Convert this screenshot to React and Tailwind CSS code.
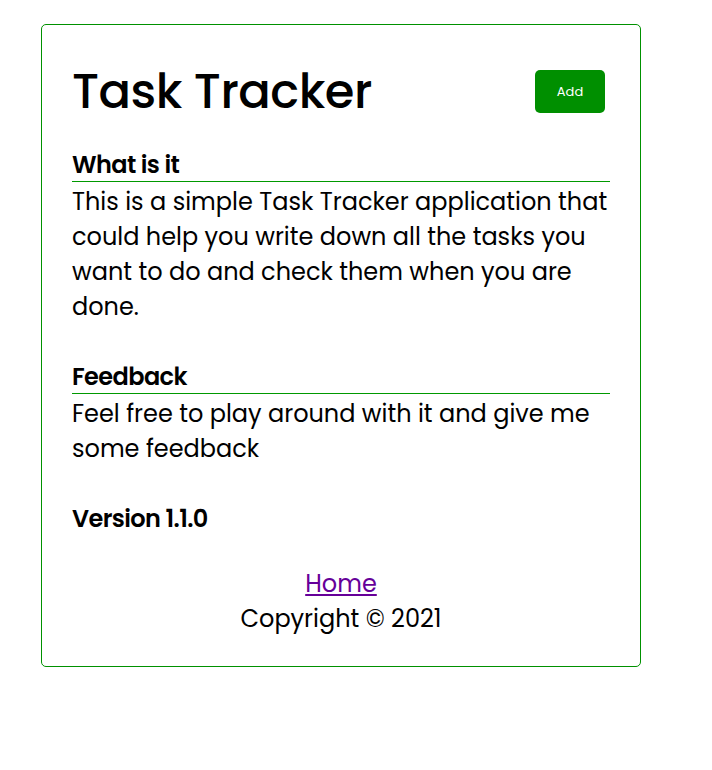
import React from 'react';

export default function App() {
  return (
    <div className="min-h-screen bg-white pt-[24px] pl-[41px] font-['Poppins','Open_Sans',sans-serif] text-black">
      <div className="w-[600px] rounded-[5px] border border-[#009100] px-[30px] pt-[30px] pb-[30px]">
        {/* Header */}
        <header className="flex h-[73px] items-center justify-between">
          <h1 className="text-[48px] font-medium leading-none tracking-[-0.5px]">Task Tracker</h1>
          <button className="mr-[5px] h-[43px] w-[70px] rounded-[5px] bg-[#008f00] text-[13px] text-white">
            Add
          </button>
        </header>

        {/* About */}
        <div className="mt-[20px]">
          <h3 className="text-[24px] font-semibold leading-[33px] tracking-[-0.6px]">What is it</h3>
          <p className="border-t border-solid border-[#009900] pt-[2px] text-[24px] leading-[35px]">
            This is a simple Task Tracker application that could help you write down all the tasks you want to do and
            check them when you are done.
          </p>

          <h3 className="mt-[36px] text-[24px] font-semibold leading-[33px] tracking-[-0.6px]">Feedback</h3>
          <p className="border-t border-solid border-[#009900] pt-[2px] text-[24px] leading-[35px]">
            Feel free to play around with it and give me some feedback
          </p>

          <h4 className="mt-[35px] text-[24px] font-semibold leading-[35px] tracking-[-0.6px]">Version 1.1.0</h4>
        </div>

        {/* Footer */}
        <footer className="mt-[30px] text-center text-[24px] leading-[35px]">
          <a href="#" className="text-[#660099] underline">Home</a>
          <p>Copyright © 2021</p>
        </footer>
      </div>
    </div>
  );
}
